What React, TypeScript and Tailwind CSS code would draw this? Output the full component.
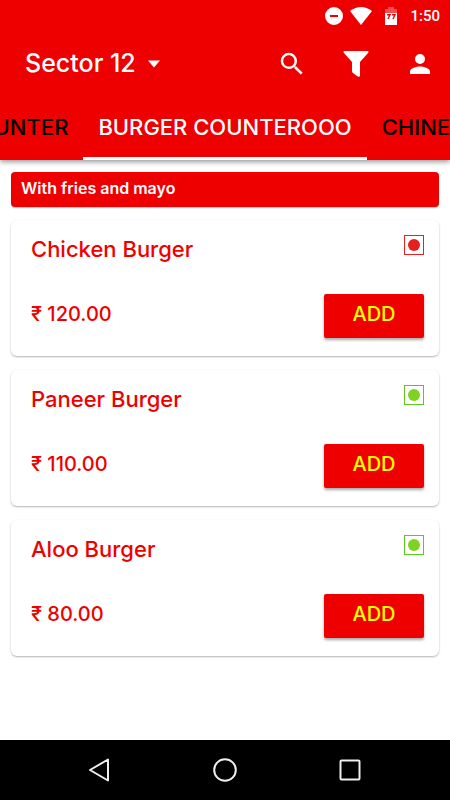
import { useState } from "react";
import clsx from "clsx";

type Item = { name: string; price: string; veg: boolean };

const items: Item[] = [
  { name: "Chicken Burger", price: "120.00", veg: false },
  { name: "Paneer Burger", price: "110.00", veg: true },
  { name: "Aloo Burger", price: "80.00", veg: true },
];

const tabs = ["COUNTER", "BURGER COUNTEROOO", "CHINESE"];

const StatusBar = () => (
  <div className="flex h-8 items-center justify-end pr-2.5 text-white">
    <svg viewBox="0 0 20 20" className="mr-1.5 size-5" fill="currentColor" aria-hidden="true">
      <path fillRule="evenodd" d="M10 1a9 9 0 1 0 0 18a9 9 0 1 0 0-18ZM6 9v2h8V9Z" />
    </svg>
    <svg viewBox="0 0 22 18" className="mr-3 h-4.5 w-5.5" fill="currentColor" aria-hidden="true">
      <path d="M11 18L0 4Q11-4 22 4Z" />
    </svg>
    <svg viewBox="0 0 14 20" className="mr-3 h-5 w-3.5" aria-hidden="true">
      <path d="M4 1h6v2h3v4H1V3h3Z" fill="#fff" opacity=".3" />
      <path d="M1 7h12v12H1Z" fill="#fff" />
      <path
        d="M3 8.700h3l-2 4.300M8 8.700h3l-2 4.300"
        fill="none"
        stroke="#ee0000"
        strokeWidth="1.400"
      />
    </svg>
    <span className="font-['Roboto',sans-serif] text-[15px] leading-5 font-medium">1:50</span>
  </div>
);

const Toolbar = () => (
  <div className="flex h-16 items-center pr-[15px] pl-[25px] text-white">
    <button type="button" className="flex items-center gap-3 text-[25px] font-medium">
      Sector 12
      <svg viewBox="0 0 12 7" className="h-2 w-3" fill="currentColor" aria-hidden="true">
        <path d="M0 0h12L6 7Z" />
      </svg>
    </button>
    <div className="ml-auto flex items-center gap-9">
      <button type="button" aria-label="Search">
        <svg viewBox="0 0 24 24" className="size-[30px]" fill="currentColor">
          <path d="M15.500 14h-.790l-.280-.270A6.471 6.471 0 0 0 16 9.500 6.500 6.500 0 1 0 9.500 16c1.610 0 3.090-.590 4.230-1.570l.270.280v.790l5 4.990L20.490 19l-4.990-5zm-6 0C7.010 14 5 11.990 5 9.500S7.010 5 9.500 5 14 7.010 14 9.500 11.990 14 9.500 14z" />
        </svg>
      </button>
      <button type="button" aria-label="Filter">
        <svg viewBox="0 0 26 26" className="size-[26px]" fill="currentColor">
          <path d="M1 0h24q1 1 0 2l-8 9v14q-1 1.500-3 0l-4-3q-1-.600-1-2v-9L1 2Q0 1 1 0Z" />
        </svg>
      </button>
      <button type="button" aria-label="Account">
        <svg viewBox="0 0 24 24" className="size-[30px]" fill="currentColor">
          <path d="M12 12a4 4 0 1 0 0-8 4 4 0 0 0 0 8zm0 2c-2.670 0-8 1.340-8 4v2h16v-2c0-2.660-5.330-4-8-4z" />
        </svg>
      </button>
    </div>
  </div>
);

const Tabs = () => {
  const [active, setActive] = useState(1);

  return (
    <div role="tablist" className="flex h-16 overflow-hidden text-[22px] font-medium">
      {tabs.map((tab, i) => (
        <div
          key={tab}
          className={clsx(
            "flex",
            i === 1 ? "shrink-0" : "min-w-0 flex-1 overflow-hidden",
            i === 0 && "justify-end"
          )}
        >
          <button
            type="button"
            role="tab"
            aria-selected={active === i}
            onClick={() => setActive(i)}
            className={clsx(
              "shrink-0 border-b-3 px-[15px] pt-0.5 whitespace-nowrap",
              active === i ? "border-white text-white" : "border-transparent text-black"
            )}
          >
            {tab}
          </button>
        </div>
      ))}
    </div>
  );
};

// square outline with a dot: red for meat, green for vegetarian
const FoodMark = ({ veg }: { veg: boolean }) => (
  <svg
    viewBox="0 0 20 20"
    className="size-5"
    role="img"
    aria-label={veg ? "Vegetarian" : "Non-vegetarian"}
  >
    <rect x=".5" y=".5" width="19" height="19" fill="none" stroke={veg ? "#5fc820" : "#e82020"} />
    <circle cx="10" cy="10" r="6" fill={veg ? "#7ed321" : "#e52020"} />
  </svg>
);

const ItemCard = ({ item }: { item: Item }) => (
  <li className="flex h-34 flex-col justify-between rounded-md bg-white pt-[15px] pr-[15px] pb-[18px] pl-5 shadow-[0_1px_2px_rgba(0,0,0,0.3)]">
    <div className="flex items-start justify-between">
      <h2 className="text-[22px] leading-7 font-medium">{item.name}</h2>
      <FoodMark veg={item.veg} />
    </div>
    <div className="flex items-start justify-between">
      <p className="pt-1.5 text-xl leading-7 font-medium">₹ {item.price}</p>
      <button
        type="button"
        className="h-11 w-25 rounded-xs bg-[#ee0000] pb-1 text-xl font-medium text-[#ffff00] shadow-[0_2px_3px_rgba(0,0,0,0.35)]"
      >
        ADD
      </button>
    </div>
  </li>
);

export default function App() {
  return (
    <div className="flex min-h-screen flex-col bg-white font-['Inter',sans-serif]">
      <header className="relative bg-[#ee0000] shadow-[0_2px_5px_rgba(0,0,0,0.4)]">
        <StatusBar />
        <Toolbar />
        <Tabs />
      </header>
      <main className="flex-1 px-[11px] pt-3 text-[#ee0000]">
        <p className="h-[35px] rounded-sm bg-[#ee0000] px-2.5 pt-1 text-base font-semibold text-white shadow-[0_1px_1px_rgba(0,0,0,0.2)]">
          With fries and mayo
        </p>
        <ul className="mt-[13px] flex flex-col gap-3.5 pb-4">
          {items.map((item) => (
            <ItemCard key={item.name} item={item} />
          ))}
        </ul>
      </main>
      <nav className="flex h-15 items-center justify-center gap-[101px] bg-black">
        <button type="button" aria-label="Back">
          <svg viewBox="0 0 24 24" className="size-6" fill="none" stroke="#eee" strokeWidth="2">
            <path d="M20 1.500v21L2 12Z" strokeLinejoin="round" />
          </svg>
        </button>
        <button type="button" aria-label="Home">
          <svg viewBox="0 0 24 24" className="size-6" fill="none" stroke="#eee" strokeWidth="2">
            <circle cx="12" cy="12" r="10.800" />
          </svg>
        </button>
        <button type="button" aria-label="Recent apps">
          <svg viewBox="0 0 24 24" className="size-6" fill="none" stroke="#eee" strokeWidth="2">
            <rect x="2.500" y="2.500" width="19" height="19" rx="1" />
          </svg>
        </button>
      </nav>
    </div>
  );
}
